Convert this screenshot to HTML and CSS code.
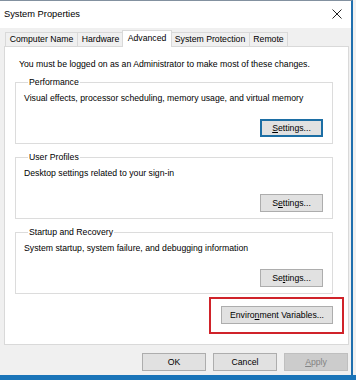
FILE: index.html
```html
<!DOCTYPE html>
<html>
<head>
<meta charset="utf-8">
<link rel="stylesheet" href="styles.css">
</head>
<body>
<div class="window">
  <div class="titlebar">
    <span class="title">System Properties</span>
    <svg class="close" width="10" height="10" viewBox="0 0 10 10"><path d="M0.5 0.5 L9.5 9.5 M9.5 0.5 L0.5 9.5" stroke="#222" stroke-width="1" fill="none"/></svg>
  </div>
  <div class="tabs">
    <div class="tab t1">Computer Name</div>
    <div class="tab t2">Hardware</div>
    <div class="tab sel t3">Advanced</div>
    <div class="tab t4">System Protection</div>
    <div class="tab t5">Remote</div>
  </div>
  <div class="panel">
    <div class="note">You must be logged on as an Administrator to make most of these changes.</div>
    <fieldset class="group">
      <legend>Performance</legend>
      <div class="desc">Visual effects, processor scheduling, memory usage, and virtual memory</div>
      <div class="btnrow"><button class="btn focus"><u>S</u>ettings...</button></div>
    </fieldset>
    <fieldset class="group">
      <legend>User Profiles</legend>
      <div class="desc">Desktop settings related to your sign-in</div>
      <div class="btnrow"><button class="btn">S<u>e</u>ttings...</button></div>
    </fieldset>
    <fieldset class="group">
      <legend>Startup and Recovery</legend>
      <div class="desc">System startup, system failure, and debugging information</div>
      <div class="btnrow"><button class="btn">Se<u>t</u>tings...</button></div>
    </fieldset>
    <div class="envrow">
      <div class="highlight"><button class="btn env">Enviro<u>n</u>ment Variables...</button></div>
    </div>
  </div>
  <div class="footer">
    <button class="btn dlg">OK</button>
    <button class="btn dlg">Cancel</button>
    <button class="btn dlg disabled"><u>A</u>pply</button>
  </div>
</div>
<div class="desk"></div>
</body>
</html>
```
FILE: styles.css
```css
html, body {
  margin: 0;
  padding: 0;
}
body {
  width: 356px;
  height: 380px;
  overflow: hidden;
  background: #f0f0f0;
  font-family: "Liberation Sans", Arial, sans-serif;
  font-size: 8.7px;
  color: #000;
}
.window {
  width: 353px;
  height: 375px;
  border-top: 1px solid #8391a0;
  border-right: 2px solid #1f6fae;
  box-sizing: border-box;
  background: #f0f0f0;
  display: flex;
  flex-direction: column;
}
.titlebar {
  height: 27px;
  flex: none;
  background: #fff;
  display: flex;
  align-items: center;
  padding-left: 4px;
  padding-right: 9px;
}
.title {
  font-size: 9.3px;
  flex: 1;
  padding-bottom: 1px;
}
.close {
  margin-top: -1px;
}
.tabs {
  display: flex;
  align-items: flex-end;
  height: 16px;
  margin-top: 2px;
  padding-left: 5px;
  flex: none;
  position: relative;
  z-index: 2;
}
.tab {
  height: 14px;
  line-height: 13px;
  box-sizing: border-box;
  border: 1px solid #d9d9d9;
  border-bottom: none;
  background: #f0f0f0;
  text-align: center;
  margin-right: -1px;
}
.t1 { width: 73px; }
.t2 { width: 47px; }
.t3 { width: 50px; }
.t4 { width: 80px; }
.t5 { width: 39px; }
.tab.sel {
  height: 17px;
  background: #fff;
  line-height: 14px;
  margin-left: -1px;
  margin-right: -2px;
  margin-bottom: -1px;
  position: relative;
  z-index: 3;
}
.panel {
  margin-left: 4px;
  width: 345px;
  height: 299px;
  box-sizing: border-box;
  flex: none;
  border: 1px solid #d9d9d9;
  background: #fff;
  padding: 11px 15px 0 10px;
}
.note {
  line-height: 12px;
  margin-left: 4px;
  margin-bottom: 6px;
}
.group {
  margin: 0 0 7px 0;
  padding: 4px 9px 6px 8px;
  border: 1px solid #dcdcdc;
  width: 318px;
  box-sizing: border-box;
}
.group legend {
  padding: 0 1px;
  margin-left: 4px;
  line-height: 12px;
}
.desc {
  line-height: 12px;
}
.btnrow {
  display: flex;
  justify-content: flex-end;
  margin-top: 15px;
}
.btn {
  font-family: inherit;
  font-size: 8.7px;
  color: #000;
  background: #e1e1e1;
  border: 1px solid #adadad;
  height: 18px;
  width: 63px;
  padding: 0;
  line-height: 15px;
  box-sizing: border-box;
}
.btn.focus {
  border-color: #1c6ea4;
  box-shadow: inset 0 0 0 1px #1c6ea4;
}
.envrow {
  display: flex;
  justify-content: flex-end;
  margin-top: -4px;
  margin-right: -11px;
}
.highlight {
  border: 2px solid #d0232a;
  padding: 7px 9px 8px 10px;
}
.btn.env {
  width: 112px;
}
.footer {
  display: flex;
  justify-content: flex-end;
  gap: 7px;
  padding-top: 8px;
  padding-right: 3px;
}
.btn.dlg {
  width: 64px;
}
.btn.disabled {
  background: #cccccc;
  border-color: #bfbfbf;
  color: #838383;
}
.desk {
  height: 5px;
  background: #1a74b8;
}
```
